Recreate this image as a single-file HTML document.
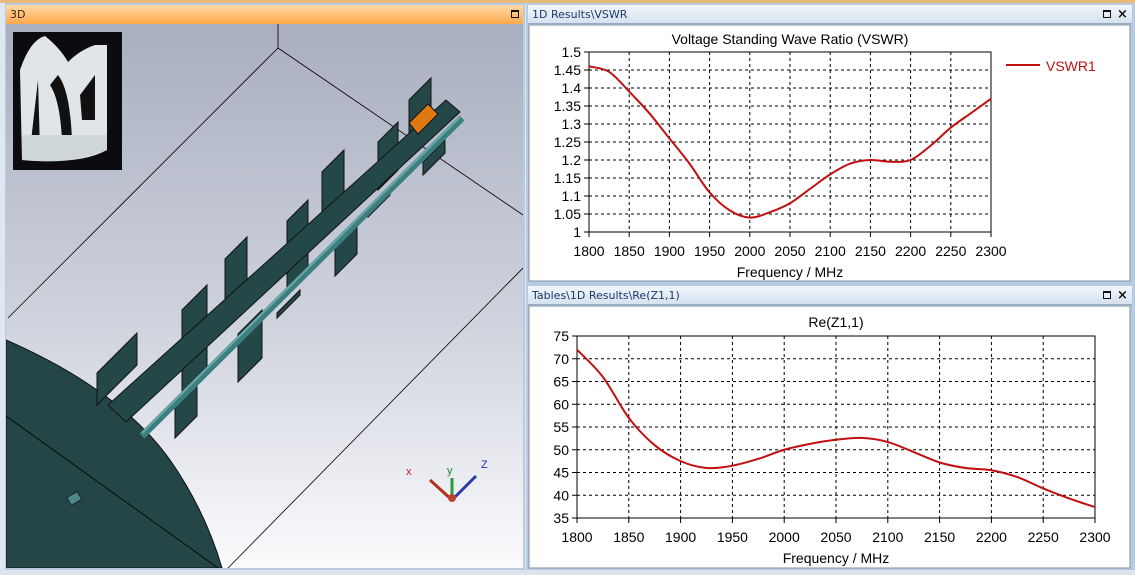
<!DOCTYPE html>
<html><head><meta charset="utf-8"><style>
body{margin:0;width:1135px;height:575px;overflow:hidden;background:#dfe7f1;font-family:Tahoma,"DejaVu Sans","Liberation Sans",sans-serif;position:relative}
.tb{position:absolute;height:19px;font-size:11px;line-height:19px;padding-left:4px;box-sizing:border-box;color:#1a3a6a}
.or{background:linear-gradient(#ffd9a8,#ffa94c);color:#3a2a10}
.bl{background:linear-gradient(#f2f6fb,#d6e2f0);border-bottom:1px solid #9aaac0}
.ic{position:absolute;top:5px;width:8px;height:8px;border:1.5px solid #111;border-top-width:2.5px;box-sizing:border-box}
.x{position:absolute;top:0;font-size:13px;font-weight:bold;color:#111}
</style></head><body>
<div style="position:absolute;left:0;top:0;width:1135px;height:3px;background:#e8b878"></div>
<div style="position:absolute;left:5px;top:3px;width:520px;height:567px;background:#b8cbe0"></div>
<div class="tb or" style="left:6px;top:5px;width:517px">3D<div class="ic" style="left:505px"></div></div>
<svg style="position:absolute;left:6px;top:24px" width="517" height="544" viewBox="6 24 517 544">
<defs><linearGradient id="bg" x1="0" y1="0" x2="0" y2="1"><stop offset="0" stop-color="#a9afc0"/><stop offset="0.55" stop-color="#cfd3dd"/><stop offset="1" stop-color="#fbfbfd"/></linearGradient></defs>
<rect x="6" y="24" width="517" height="544" fill="url(#bg)"/>
<g stroke="#000" stroke-width="0.8" fill="none">
<line x1="278" y1="24" x2="278" y2="48"/><line x1="278" y1="48" x2="8" y2="318"/><line x1="278" y1="48" x2="523" y2="215"/><line x1="523" y1="268" x2="228" y2="568"/></g>
<path d="M6,340 Q120,390 170,460 Q205,510 222,568 L6,568 Z" fill="#244646" stroke="#111"/>
<line x1="6" y1="416" x2="218" y2="568" stroke="#000" stroke-width="0.8"/>
<rect x="68" y="494" width="12" height="9" fill="#4a8a8a" stroke="#222" transform="rotate(-30 74 498)"/>
<g fill="#244848" stroke="#111" stroke-width="1" id="fins"></g>
<polygon points="409,123 428,104 438,114 418,134" fill="#e07a10" stroke="#111"/>
<line x1="142" y1="436" x2="462" y2="118" stroke="#3d7f80" stroke-width="7"/>
<line x1="142" y1="433" x2="460" y2="117" stroke="#6aa8a8" stroke-width="2"/>
<rect x="13" y="32" width="109" height="138" fill="#0c0c10"/>
<path d="M20,70 Q30,40 45,36 Q60,48 68,62 Q80,50 95,45 L107,45 L107,150 Q80,165 22,160 Z" fill="#dfe5e8"/>
<path d="M38,80 L40,150 L30,150 Z M58,75 Q70,90 72,140 L62,140 Q60,100 50,85 Z M80,95 L95,75 L95,120 L82,120 Z" fill="#111"/>
<path d="M22,135 L107,135 L107,150 Q70,165 22,160 Z" fill="#cfd6da"/>
<g stroke-width="3"><line x1="452" y1="500" x2="430" y2="480" stroke="#b03020"/><line x1="452" y1="500" x2="452" y2="478" stroke="#2a9a3a"/><line x1="452" y1="500" x2="476" y2="476" stroke="#2a3aa8"/></g>
<circle cx="452" cy="498" r="4" fill="#c04030"/>
<text x="406" y="475" font-size="11" fill="#c02020" font-family="Liberation Sans">x</text>
<text x="447" y="474" font-size="11" fill="#208030" font-family="Liberation Sans">y</text>
<text x="481" y="468" font-size="11" fill="#2030a0" font-family="Liberation Sans">Z</text>
</svg>
<div style="position:absolute;left:526px;top:3px;width:609px;height:567px;background:#b8cbe0"></div>
<div class="tb bl" style="left:528px;top:5px;width:604px">1D Results\VSWR<div class="ic" style="left:575px"></div><div class="x" style="left:589px">×</div></div>
<div class="tb bl" style="left:528px;top:286px;width:604px">Tables\1D Results\Re(Z1,1)<div class="ic" style="left:575px"></div><div class="x" style="left:589px">×</div></div>
<svg style="position:absolute;left:0;top:0" width="1135" height="575">
<rect x="529" y="25" width="601" height="256" fill="#fff" stroke="#8090a8"/>
<rect x="529" y="306" width="601" height="262" fill="#fff" stroke="#8090a8"/>
<g id="g1"></g>
</svg>
<div style="position:absolute;left:0;top:570px;width:1135px;height:5px;background:#dde4ee"></div>
<script>
var f='';
function fin(x,w,t,b){f+='<polygon points="'+x+','+(t+w)+' '+(x+w)+','+t+' '+(x+w)+','+(b-w)+' '+x+','+b+'"/>';}
fin(409,22,78,150);fin(378,20,122,190);fin(322,22,150,240);fin(287,21,200,290);fin(225,22,237,320);
fin(182,25,285,400);fin(97,40,333,405);
fin(423,22,140,175);fin(368,22,192,217);fin(335,22,225,276);fin(277,23,290,318);fin(238,24,310,382);fin(175,22,385,438);
f+='<polygon points="108,405 446,100 460,112 126,422"/>';
document.getElementById('fins').innerHTML=f;
var s='',F='font-family="Liberation Sans,sans-serif" font-size="14" fill="#000"';
function plot(L,R,T,B,y0,y1,ys,lab,data,title,tx,ty){
 var dx=(R-L)/10;
 for(var i=0;i<=10;i++){var x=L+i*dx;if(i>0&&i<10)s+='<line x1="'+x+'" y1="'+T+'" x2="'+x+'" y2="'+B+'" stroke="#000" stroke-dasharray="3,3"/>';
  s+='<line x1="'+x+'" y1="'+B+'" x2="'+x+'" y2="'+(B+5)+'" stroke="#000"/><text x="'+x+'" y="'+(B+24)+'" text-anchor="middle" '+F+'>'+(1800+50*i)+'</text>';}
 var n=lab.length-1;
 for(var j=0;j<=n;j++){var y=B-(B-T)*j/n;if(j>0&&j<n)s+='<line x1="'+L+'" y1="'+y+'" x2="'+R+'" y2="'+y+'" stroke="#000" stroke-dasharray="3,3"/>';
  s+='<line x1="'+(L-5)+'" y1="'+y+'" x2="'+L+'" y2="'+y+'" stroke="#000"/><text x="'+(L-8)+'" y="'+(y+5)+'" text-anchor="end" '+F+'>'+lab[j]+'</text>';}
 s+='<rect x="'+L+'" y="'+T+'" width="'+(R-L)+'" height="'+(B-T)+'" fill="none" stroke="#000"/>';
 var p=data.map(function(v,i){return [L+(R-L)*i/(data.length-1),B-(v-y0)/(y1-y0)*(B-T)]});
 var d='M'+p[0];for(var i=0;i<p.length-1;i++){var a=p[i-1]||p[i],b=p[i],c=p[i+1],e=p[i+2]||c;
 d+=' C'+(b[0]+(c[0]-a[0])/6)+','+(b[1]+(c[1]-a[1])/6)+' '+(c[0]-(e[0]-b[0])/6)+','+(c[1]-(e[1]-b[1])/6)+' '+c;}
 s+='<path d="'+d+'" fill="none" stroke="#c01010" stroke-width="2"/>';
 s+='<text x="'+tx+'" y="'+ty+'" text-anchor="middle" '+F+'>'+title+'</text>';
 s+='<text x="'+((L+R)/2)+'" y="'+(B+45)+'" text-anchor="middle" '+F+'>Frequency / MHz</text>';
}
plot(589,991,52,232,1,1.5,0,['1','1.05','1.1','1.15','1.2','1.25','1.3','1.35','1.4','1.45','1.5'],
[1.46,1.445,1.39,1.33,1.26,1.19,1.11,1.06,1.04,1.055,1.08,1.12,1.16,1.19,1.2,1.195,1.2,1.24,1.29,1.33,1.37],'Voltage Standing Wave Ratio (VSWR)',790,44);
plot(577,1095,336,518,35,75,0,['35','40','45','50','55','60','65','70','75'],
[72,66,57,51,47.5,46,46.5,48,50,51.3,52.2,52.6,51.7,49.5,47.2,46,45.5,44,41.5,39.3,37.4],'Re(Z1,1)',836,327);
s+='<line x1="1006" y1="65" x2="1040" y2="65" stroke="#c01010" stroke-width="2"/><text x="1046" y="71" font-family="Liberation Sans,sans-serif" font-size="14" fill="#c01010">VSWR1</text>';
document.getElementById('g1').innerHTML=s;
</script>
</body></html>
